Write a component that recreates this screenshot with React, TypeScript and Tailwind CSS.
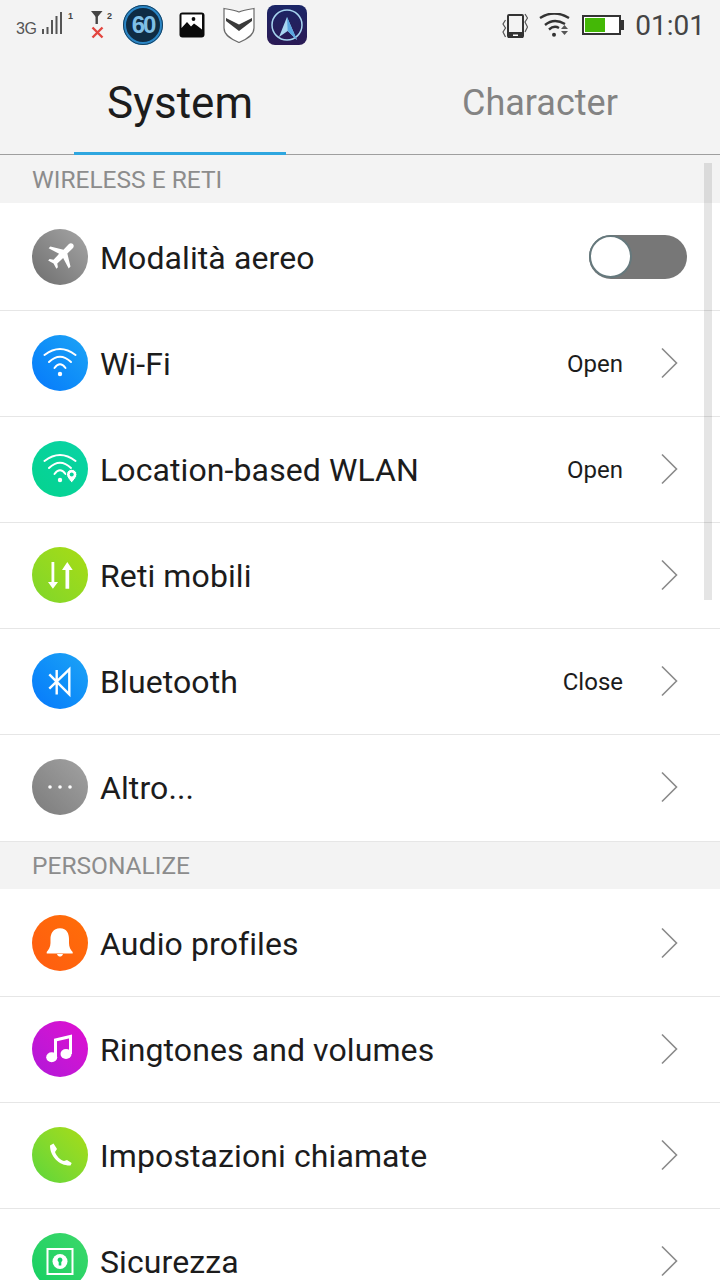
import type { ReactNode } from 'react';

function Chevron() {
  return (
    <svg width="20" height="32" viewBox="0 0 20 32" fill="none" className="shrink-0">
      <path d="M3 1.5 L17.5 16 L3 30.5" stroke="#8a8a8a" strokeWidth="1.6" />
    </svg>
  );
}

function Disc({ colors, children }: { colors: string; children: ReactNode }) {
  return (
    <div className={`w-14 h-14 rounded-full shrink-0 flex items-center justify-center bg-gradient-to-tr ${colors}`}>
      {children}
    </div>
  );
}

function Glyph({ children }: { children: ReactNode }) {
  return (
    <svg width="40" height="40" viewBox="0 0 40 40" fill="none">
      {children}
    </svg>
  );
}

function Row({ icon, label, value, box = 'h-[106px] pb-px', control }: { icon: ReactNode; label: string; value?: string; box?: string; control?: ReactNode }) {
  return (
    <div className={`${box} pl-8 pr-[41px] flex items-center bg-white border-b border-[#e6e6e6]`}>
      {icon}
      <span className="ml-3 mt-[2px] text-[32px] leading-none text-[#1c1c1c] grow tracking-[0.1px]">{label}</span>
      {value && <span className="mt-[2px] text-[24px] text-[#1c1c1c] mr-[36px]">{value}</span>}
      {control ?? <Chevron />}
    </div>
  );
}

function Section({ title, box }: { title: string; box: string }) {
  return (
    <div className={`${box} pl-8 flex items-center bg-[#f3f3f3] text-[24.5px] text-[#8c8c8c]`}>{title}</div>
  );
}

function Toggle() {
  return (
    <div className="w-[98px] h-11 -mr-2 rounded-full bg-[#777777] flex items-center">
      <div className="w-[43px] h-[43px] rounded-full bg-white border-2 border-[#66797d]" />
    </div>
  );
}

const wifiArcs = (
  <>
    <path d="M4.5 12 Q20 0 35.5 12" stroke="white" strokeWidth="2" strokeLinecap="round" />
    <path d="M9 19 Q20 8.5 31 19" stroke="white" strokeWidth="2" strokeLinecap="round" />
    <path d="M14.5 25 Q20 17.5 25.5 25" stroke="white" strokeWidth="2" strokeLinecap="round" />
    <circle cx="20" cy="31" r="2.2" fill="white" />
  </>
);

function StatusBar() {
  return (
    <div className="h-[50px] flex items-center">
      <span className="ml-4 mt-[8px] w-5 text-[16px] leading-none tracking-[-0.5px] font-['Liberation_Sans',sans-serif] text-[#555]">3G</span>
      <svg width="72" height="40" viewBox="0 0 72 40" className="ml-[5px] font-['Liberation_Sans',sans-serif]">
        <path d="M2 29V24M6.5 29V22M11 29V15M15.5 29V11M20 29V7" stroke="#555" strokeWidth="2" />
        <text x="27" y="13.5" fontSize="9" fontWeight="700" fill="#444">1</text>
        <path d="M50 6H61.5L55.7 13Z" fill="#444" />
        <path d="M55.7 10V19" stroke="#444" strokeWidth="2.4" />
        <path d="M51.5 22.5 L61.5 32.5 M61.5 22.5 L51.5 32.5" stroke="#e2453f" strokeWidth="2.4" />
        <text x="66" y="14" fontSize="9" fontWeight="700" fill="#444">2</text>
      </svg>
      <div className="ml-[10px] w-10 h-10 rounded-full bg-[#0f2c44] border-[3px] border-[#2a86c6] outline outline-1 -outline-offset-1 outline-[#17405f] flex items-center justify-center text-[#7fbfe6] text-[24px] leading-none font-bold font-['Liberation_Sans',sans-serif] tracking-[-2px]">60</div>
      <svg width="26" height="26" viewBox="0 0 26 26" className="ml-4">
        <rect x="0.5" y="0.5" width="25" height="25" rx="3" fill="#0a0a0a" />
        <path d="M2.5 2.5 H23 V17.5 L18.5 14 L15 11.5 L12 14.5 L8 10 L2.5 16 Z" fill="white" />
        <circle cx="14.5" cy="7" r="1.9" fill="#0a0a0a" />
      </svg>
      <svg width="32" height="36" viewBox="0 0 32 36" className="ml-[18px]">
        <path d="M1 1.5 C7 2.5 12 3 16 5 C20 3 25 2.5 31 1.5 V21 C31 29 22 33 16 35.5 C10 33 1 29 1 21 Z" fill="white" stroke="#6a6a6a" strokeWidth="1.2" />
        <path d="M3 11 L16 17.5 L29 11 V14 L16 24 L3 14 Z" fill="#3a3a3a" />
      </svg>
      <div className="ml-3 w-10 h-10 rounded-lg bg-gradient-to-b from-[#1a2566] to-[#2a1a55]">
        <svg width="40" height="40" viewBox="0 0 40 40" fill="none">
          <circle cx="20" cy="20" r="15" stroke="#a7d5f0" strokeWidth="1.5" />
          <path d="M20 12 L30 35 L20.7 26 L12 32 Z" fill="#a7d5f0" />
          <path d="M20 12 L30 35 L20.7 26 Z" fill="#5aa6e0" />
        </svg>
      </div>
      <div className="ml-auto flex items-center mr-[15px]">
        <svg width="26" height="26" viewBox="0 0 26 26" fill="none" className="mr-[11px] mt-[1px]">
          <rect x="6" y="2" width="15" height="22" rx="1" stroke="#333" strokeWidth="2" />
          <rect x="6" y="19" width="15" height="6" fill="#333" />
          <rect x="11" y="21.5" width="5" height="1.5" fill="white" />
          <path d="M3.5 7 L1 11 L3.5 15 L1 19 L3.5 24 M23 1 L25.5 5 L23 9 L25.5 14 L23 19" stroke="#555" strokeWidth="1.2" />
        </svg>
        <svg width="31" height="24" viewBox="0 0 31 24" fill="none" className="mr-3">
          <path d="M1 5 Q15 -4 30 5" stroke="#333" strokeWidth="2.4" />
          <path d="M6 12 Q15 4.5 26 11" stroke="#333" strokeWidth="2.4" />
          <path d="M10 16.5 Q15 12 20 15" stroke="#333" strokeWidth="2.4" />
          <circle cx="15" cy="21.7" r="2" fill="#333" />
          <path d="M25.5 12 L29 16 H22 Z M22 18 H29 L25.5 22 Z" fill="#555" />
        </svg>
        <div className="w-[39px] h-5 border-2 border-[#333] bg-white p-px flex">
          <div className="w-5 bg-[#44b806]" />
        </div>
        <div className="w-[3px] h-[10px] bg-[#333] mr-[11px]" />
        <span className="mt-[2px] text-[28px] leading-none text-[#444] font-['Roboto',sans-serif]">01:01</span>
      </div>
    </div>
  );
}

function Tabs() {
  return (
    <div className="h-[105px] flex border-b border-[#9e9e9e]">
      <div className="ml-[74px] w-[212px] h-[105px] flex items-center justify-center border-b-[3px] border-[#2ea6df] pt-[4px]">
        <span className="text-[44px] leading-none text-[#1c1c1c]">System</span>
      </div>
      <div className="flex-1 flex items-center pl-[176px] pt-px">
        <span className="text-[36px] leading-none text-[#838383]">Character</span>
      </div>
    </div>
  );
}

export default function App() {
  return (
    <div className="w-[720px] h-[1280px] overflow-hidden relative bg-[#f3f3f3] font-['Roboto',sans-serif]">
      <StatusBar />
      <Tabs />
      <Section title="WIRELESS E RETI" box="h-12 pt-[3px]" />
      <Row
        label="Modalità aereo"
        box="h-[108px]"
        control={<Toggle />}
        icon={
          <Disc colors="from-[#6e6e6e] to-[#a6a6a6]">
            <svg width="36" height="36" viewBox="0 0 24 24" fill="white">
              <path d="M20.6 3.4c-.8-.8-2-.7-2.8.1l-3.5 3.6L5.6 5 4.4 6.2l7 3.7-3.7 3.9-2.6-.4-1 1 3.6 1.9 1.9 3.6 1-1-.4-2.6 3.9-3.7 3.7 7 1.2-1.2-2.1-8.7 3.6-3.5c.8-.8.9-2 .1-2.8z" />
            </svg>
          </Disc>
        }
      />
      <Row label="Wi-Fi" value="Open" icon={<Disc colors="from-[#0a78fb] to-[#1ea4f5]"><Glyph>{wifiArcs}</Glyph></Disc>} />
      <Row
        label="Location-based WLAN"
        value="Open"
        icon={
          <Disc colors="from-[#05d38e] to-[#0ad3a6]">
            <Glyph>
              {wifiArcs}
              <path d="M31.7 34 C28.5 30 26.5 28 26.5 25.5 A5.2 5.2 0 0 1 36.9 25.5 C36.9 28 35 30 31.7 34Z" fill="white" stroke="#07d39a" strokeWidth="1" />
              <circle cx="31.7" cy="25.5" r="2" fill="#07d39a" />
            </Glyph>
          </Disc>
        }
      />
      <Row
        label="Reti mobili"
        icon={
          <Disc colors="from-[#7ed62a] to-[#a8dc12]">
            <Glyph>
              <path d="M11.5 7H14.3V27H18L12.9 33.7L8 27H11.5Z" fill="white" />
              <path d="M25.5 33.7H29.2V15H32.7L27.3 7L22 15H25.5Z" fill="white" />
            </Glyph>
          </Disc>
        }
      />
      <Row
        label="Bluetooth"
        value="Close"
        icon={
          <Disc colors="from-[#0a78fb] to-[#1ea4f5]">
            <Glyph>
              <path d="M16.7 9V33.5M9.3 13.3L29.3 33.3V8.3L9.3 27.6" stroke="white" strokeWidth="2.4" />
            </Glyph>
          </Disc>
        }
      />
      <Row
        label="Altro..."
        box="h-[107px] pb-[2px]"
        icon={
          <Disc colors="from-[#7c7c7c] to-[#a2a2a2]">
            <Glyph>
              <circle cx="10" cy="20" r="1.8" fill="white" />
              <circle cx="20" cy="20" r="1.8" fill="white" />
              <circle cx="30" cy="20" r="1.8" fill="white" />
            </Glyph>
          </Disc>
        }
      />
      <Section title="PERSONALIZE" box="h-[47px] pt-[2px]" />
      <Row
        label="Audio profiles"
        box="h-[108px]"
        icon={
          <Disc colors="from-[#ff5c10] to-[#ff6e08]">
            <Glyph>
              <path d="M20 5.3C13 5.3 10.5 11 10.5 16V20C10.5 24 8.5 27 6.7 29V30.5H32.7V29C30.5 27 29 24 29 20V16C29 11 27 5.3 20 5.3Z" fill="white" />
              <path d="M17 31H23C22.5 33 21 33.5 20 33.5C19 33.5 17.5 33 17 31Z" fill="white" />
            </Glyph>
          </Disc>
        }
      />
      <Row
        label="Ringtones and volumes"
        icon={
          <Disc colors="from-[#b017d8] to-[#e00ad0]">
            <Glyph>
              <path d="M15.5 28V11L30.5 7.5V25" stroke="white" strokeWidth="3" />
              <ellipse cx="11.7" cy="28.3" rx="5.5" ry="5" fill="white" />
              <ellipse cx="26" cy="25" rx="5.5" ry="5" fill="white" />
            </Glyph>
          </Disc>
        }
      />
      <Row
        label="Impostazioni chiamate"
        icon={
          <Disc colors="from-[#58d63a] to-[#a8dc12]">
            <Glyph>
              <path d="M10 10.5L13.5 8.5L17 14L15 17C16.5 21 20 25 24 26L27 25L31.7 28L30.5 30.5C20 31 10 22 10 10.5Z" fill="white" />
            </Glyph>
          </Disc>
        }
      />
      <Row
        label="Sicurezza"
        icon={
          <Disc colors="from-[#0ecf62] to-[#3cd86a]">
            <Glyph>
              <rect x="7.5" y="8" width="25" height="25" stroke="white" strokeWidth="2" />
              <circle cx="20" cy="20.5" r="7.5" fill="white" />
              <path d="M20 16.5A2.5 2.5 0 0 1 21.3 21.1V24.5H18.7V21.1A2.5 2.5 0 0 1 20 16.5Z" fill="#14d066" />
            </Glyph>
          </Disc>
        }
      />
      <div className="absolute left-[704px] top-[163px] w-2 h-[437px] bg-black/10" />
    </div>
  );
}
